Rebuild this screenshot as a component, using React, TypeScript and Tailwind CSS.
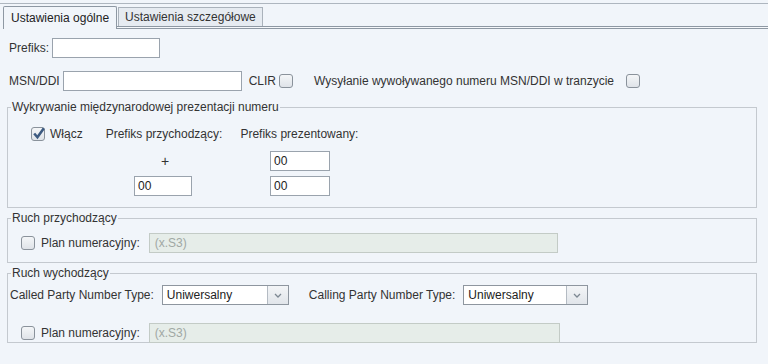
import React from "react";

const Checkbox = ({ checked = false }: { checked?: boolean }) => (
  <span className="relative inline-block h-[14px] w-[14px] shrink-0 rounded-[3px] border border-[#8a929b] bg-gradient-to-b from-[#f4f6f8] to-[#dfe3e8]">
    {checked && (
      <svg viewBox="0 0 14 14" className="absolute -left-px -top-[2px] h-[15px] w-[15px]">
        <path d="M3 7 L6 10.5 L12 2" fill="none" stroke="#3d5a80" strokeWidth="2.4" />
      </svg>
    )}
  </span>
);

const TextInput = ({ value = "", className = "" }: { value?: string; className?: string }) => (
  <div className={`flex h-[20px] items-center border border-[#9aa3ad] bg-white px-[3px] text-[#222] ${className}`}>
    {value}
  </div>
);

const Disabled = ({ className = "" }: { className?: string }) => (
  <div className={`flex h-[20px] items-center border border-[#c3cbc6] bg-[#e6ede9] px-[5px] text-[#a0a8a4] ${className}`}>
    (x.S3)
  </div>
);

const Select = ({ value, className = "" }: { value: string; className?: string }) => (
  <div className={`flex h-[20px] border border-[#8e969f] bg-white ${className}`}>
    <div className="flex flex-1 items-center px-[4px] text-[#222]">{value}</div>
    <div className="flex w-[21px] items-center justify-center border-l border-[#b4bbc3] bg-gradient-to-b from-[#f3f5f7] to-[#e1e5ea]">
      <svg viewBox="0 0 8 5" className="h-[5px] w-[8px]">
        <path d="M1 1 L4 4 L7 1" fill="none" stroke="#7d8892" strokeWidth="1.3" />
      </svg>
    </div>
  </div>
);

const Group = ({ title, children, className = "" }: { title: string; children: React.ReactNode; className?: string }) => (
  <fieldset className={`ml-[7px] mr-[11px] border border-[#c4c9cf] ${className}`}>
    <legend className="ml-[3px] px-[1px] leading-[14px] text-[#333]">{title}</legend>
    {children}
  </fieldset>
);

export default function App() {
  return (
    <div
      className="h-[364px] w-[768px] overflow-hidden bg-[#f1f5fa] text-[12px] text-[#333]"
      style={{ fontFamily: '"Liberation Sans", Arial, sans-serif' }}
    >
      <div className="mt-[3px] border-t border-[#aeb6bf]" />
      <div className="flex h-[25px] items-end">
        <div className="ml-[3px] flex h-[23px] items-center rounded-t-[2px] border border-b-0 border-[#8e98a3] bg-[#f1f5fa] px-[7px] text-[#222]">
          Ustawienia ogólne
        </div>
        <div className="flex h-[25px] flex-1 flex-col justify-end">
          <div className="flex items-end">
            <div className="ml-[1px] flex h-[19px] items-center border border-b-0 border-[#aab2bb] bg-[#e6ebf1] px-[6px] text-[#333]">
              Ustawienia szczegółowe
            </div>
          </div>
          <div className="h-[3px] border-y border-[#8e98a3] bg-[#f6f8fb]" />
        </div>
      </div>

      <div className="ml-[9px] mt-[9px] flex items-center gap-[3px]">
        <span>Prefiks:</span>
        <TextInput className="w-[108px]" />
      </div>

      <div className="ml-[9px] mt-[13px] flex items-center">
        <span className="mr-[3px]">MSN/DDI</span>
        <TextInput className="w-[179px]" />
        <span className="ml-[7px] mr-[3px]">CLIR</span>
        <Checkbox />
        <span className="ml-[21px] mr-[12px]">Wysyłanie wywoływanego numeru MSN/DDI w tranzycie</span>
        <Checkbox />
      </div>

      <Group title="Wykrywanie międzynarodowej prezentacji numeru" className="mt-[9px] h-[108px]">
        <div className="ml-[23px] mt-[11px] flex items-center">
          <Checkbox checked />
          <span className="ml-[5px]">Włącz</span>
          <span className="ml-[23px]">Prefiks przychodzący:</span>
          <span className="ml-[18px]">Prefiks prezentowany:</span>
        </div>
        <div className="mt-[8px] flex items-center">
          <span className="ml-[152px] w-[10px] text-center text-[14px] leading-[14px]">+</span>
          <TextInput value="00" className="ml-[100px] w-[60px]" />
        </div>
        <div className="mt-[5px] flex items-center">
          <TextInput value="00" className="ml-[126px] w-[58px]" />
          <TextInput value="00" className="ml-[78px] w-[60px]" />
        </div>
      </Group>

      <Group title="Ruch przychodzący" className="mt-[3px] h-[52px]">
        <div className="ml-[13px] mt-[8px] flex items-center">
          <Checkbox />
          <span className="ml-[6px]">Plan numeracyjny:</span>
          <Disabled className="ml-[9px] w-[409px]" />
        </div>
      </Group>

      <Group title="Ruch wychodzący" className="mt-[3px] h-[77px]">
        <div className="ml-[2px] mt-[5px] flex items-center">
          <span>Called Party Number Type:</span>
          <Select value="Uniwersalny" className="ml-[8px] w-[127px]" />
          <span className="ml-[20px]">Calling Party Number Type:</span>
          <Select value="Uniwersalny" className="ml-[8px] w-[125px]" />
        </div>
        <div className="ml-[13px] mt-[18px] flex items-center">
          <Checkbox />
          <span className="ml-[6px]">Plan numeracyjny:</span>
          <Disabled className="ml-[9px] w-[411px]" />
        </div>
      </Group>
    </div>
  );
}
